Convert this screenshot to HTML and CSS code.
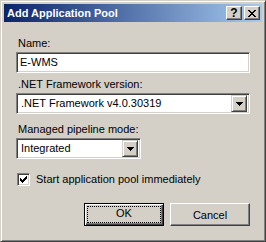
FILE: index.html
```html
<!DOCTYPE html>
<html lang="en">
<head>
    <meta charset="UTF-8">
    <title>Add Application Pool</title>
    <link rel="stylesheet" href="styles.css">
</head>
<body>
    <div class="window">
        <div class="titlebar">
            <span class="title">Add Application Pool</span>
            <div class="caption-buttons">
                <span class="cap-btn help">?</span>
                <span class="cap-btn">
                    <svg width="8" height="7" viewBox="0 0 8 7" shape-rendering="crispEdges">
                        <path d="M0 0h2v1h-2zM6 0h2v1h-2zM1 1h2v1h-2zM5 1h2v1h-2zM2 2h4v1h-4zM3 3h2v1h-2zM2 4h4v1h-4zM1 5h2v1h-2zM5 5h2v1h-2zM0 6h2v1h-2zM6 6h2v1h-2z" fill="#000"/>
                    </svg>
                </span>
            </div>
        </div>

        <form class="client">
            <label class="field-label">Name:</label>
            <div class="field textbox">E-WMS</div>

            <label class="field-label">.NET Framework version:</label>
            <div class="field combo">
                <span class="combo-value">.NET Framework v4.0.30319</span>
                <span class="combo-btn">
                    <svg width="7" height="4" viewBox="0 0 7 4" shape-rendering="crispEdges">
                        <path d="M0 0h7v1h-7zM1 1h5v1h-5zM2 2h3v1h-3zM3 3h1v1h-1z" fill="#000"/>
                    </svg>
                </span>
            </div>

            <label class="field-label">Managed pipeline mode:</label>
            <div class="field combo narrow">
                <span class="combo-value">Integrated</span>
                <span class="combo-btn">
                    <svg width="7" height="4" viewBox="0 0 7 4" shape-rendering="crispEdges">
                        <path d="M0 0h7v1h-7zM1 1h5v1h-5zM2 2h3v1h-3zM3 3h1v1h-1z" fill="#000"/>
                    </svg>
                </span>
            </div>

            <div class="check-row">
                <span class="checkbox">
                    <svg width="7" height="7" viewBox="0 0 7 7" shape-rendering="crispEdges">
                        <path d="M6 0h1v3h-1zM5 1h1v3h-1zM4 2h1v3h-1zM3 3h1v3h-1zM2 4h1v3h-1zM1 3h1v3h-1zM0 2h1v3h-1z" fill="#000"/>
                    </svg>
                </span>
                <span>Start application pool immediately</span>
            </div>

            <div class="buttons">
                <button type="button" class="btn default"><span class="focus">OK</span></button>
                <button type="button" class="btn">Cancel</button>
            </div>
        </form>
    </div>
</body>
</html>
```

FILE: styles.css
```css
* {
    box-sizing: border-box;
}
body {
    margin: 0;
    font-family: "Liberation Sans", Arial, sans-serif;
    font-size: 11px;
    color: #000;
}
.window {
    width: 266px;
    height: 242px;
    background: #d4d0c8;
    border: 1px solid;
    border-color: #d4d0c8 #404040 #404040 #d4d0c8;
    box-shadow: inset 1px 1px #fff, inset -1px -1px #808080;
    padding: 3px;
    display: flex;
    flex-direction: column;
}
.titlebar {
    height: 18px;
    display: flex;
    align-items: center;
    justify-content: space-between;
    background: linear-gradient(to right, #0a246a, #a6caf0);
    padding: 0 2px 0 3px;
}
.title {
    color: #fff;
    font-weight: bold;
    line-height: 18px;
}
.caption-buttons {
    display: flex;
    gap: 2px;
}
.cap-btn {
    width: 16px;
    height: 14px;
    display: flex;
    align-items: center;
    justify-content: center;
    background: #d4d0c8;
    border: 1px solid;
    border-color: #fff #404040 #404040 #fff;
    box-shadow: inset -1px -1px #808080;
    font-weight: bold;
    font-size: 12px;
    line-height: 1;
}
.client {
    flex: 1;
    margin: 0;
    padding: 15px 12px 0 12px;
    display: flex;
    flex-direction: column;
    align-items: flex-start;
}
.field-label {
    line-height: 13px;
    margin: 0 0 2px 2px;
}
.field {
    height: 21px;
    background: #fff;
    border: 1px solid;
    border-color: #808080 #fff #fff #808080;
    box-shadow: inset 1px 1px #404040, inset -1px -1px #d4d0c8;
    margin-bottom: 5px;
}
.textbox {
    width: 234px;
    padding: 0 3px;
    line-height: 19px;
}
.combo {
    width: 234px;
    display: flex;
    align-items: center;
    padding: 2px;
    margin-bottom: 9px;
}
.combo.narrow {
    width: 125px;
}
.combo-value {
    flex: 1;
    padding-left: 2px;
    line-height: 17px;
}
.combo-btn {
    width: 16px;
    height: 17px;
    display: flex;
    align-items: center;
    justify-content: center;
    background: #d4d0c8;
    border: 1px solid;
    border-color: #d4d0c8 #404040 #404040 #d4d0c8;
    box-shadow: inset 1px 1px #fff, inset -1px -1px #808080;
}
.check-row {
    display: flex;
    align-items: center;
    gap: 6px;
    margin: 5px 0 0 1px;
    line-height: 13px;
}
.checkbox {
    width: 13px;
    height: 13px;
    display: flex;
    align-items: center;
    justify-content: center;
    background: #fff;
    border: 1px solid;
    border-color: #808080 #fff #fff #808080;
    box-shadow: inset 1px 1px #404040, inset -1px -1px #d4d0c8;
}
.buttons {
    align-self: flex-end;
    display: flex;
    gap: 6px;
    margin-top: 17px;
}
.btn {
    width: 80px;
    height: 23px;
    padding: 0;
    font: inherit;
    color: #000;
    background: #d4d0c8;
    border: 1px solid;
    border-color: #fff #404040 #404040 #fff;
    box-shadow: inset -1px -1px #808080;
    border-radius: 0;
}
.btn.default {
    border: 1px solid #000;
    box-shadow: inset 1px 1px #fff, inset -1px -1px #404040, inset -2px -2px #808080;
    padding: 3px;
}
.focus {
    display: block;
    height: 100%;
    line-height: 13px;
    outline: 1px dotted #000;
}
```
